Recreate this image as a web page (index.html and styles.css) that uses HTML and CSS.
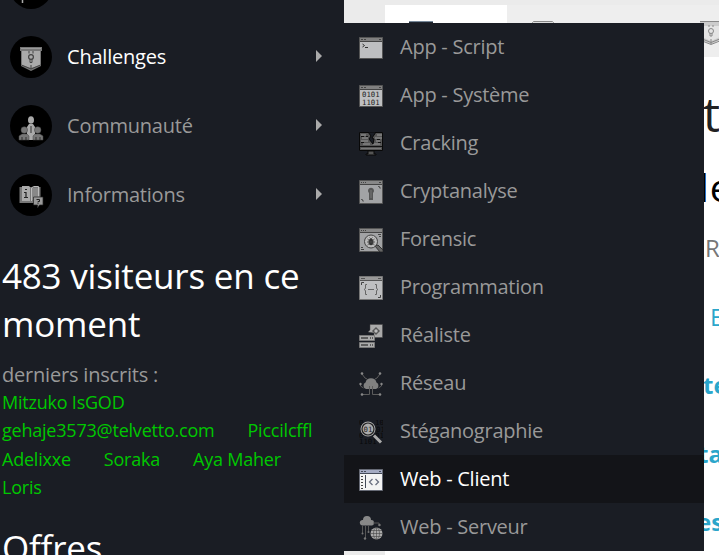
FILE: index.html
```html
<!DOCTYPE html>
<html lang="fr">
<head>
<meta charset="utf-8">
<title>Challenges</title>
<link rel="stylesheet" href="styles.css">
</head>
<body>
<div class="page">
  <aside class="sidebar">
    <ul class="nav">
      <li class="nav-item"><span class="disc"><svg width="42" height="42" viewBox="0 0 42 42"><path d="M12.500 31v5" stroke="#aaa" stroke-width="1.500"/></svg></span></li>
      <li class="nav-item active">
        <span class="disc"><svg width="42" height="42" viewBox="0 0 42 42"><path d="M10 11h22v4h-1v15l-10 5-10-5V15h-1z" fill="#777"/><path d="M12 15h18v14l-9 3-9-3z" fill="#aaa"/><path d="M11 12.500h20" stroke="#999"/><path d="M11.500 29l9.500 4 9.500-4" stroke="#444" fill="none"/><circle cx="21" cy="21" r="2.400" fill="none" stroke="#444" stroke-width="1.200"/><path d="M20 23v3.500h2V23M19 15v2.500m4-2.500v2.500M21 29v4" stroke="#444" fill="none"/></svg></span>
        <span class="label">Challenges</span><i class="caret"></i>
      </li>
      <li class="nav-item">
        <span class="disc"><svg width="42" height="42" viewBox="0 0 42 42"><g fill="#aaa"><ellipse cx="21" cy="15" rx="3" ry="3.800"/><path d="M17 35V22l2-3h4l2 3v13z"/></g><g fill="#777" stroke="#444" stroke-width=".5"><circle cx="14.300" cy="25" r="3.300"/><circle cx="27.700" cy="25" r="3.300"/><path d="M9 35v-4l3-2h5l2 2v4zM23 35v-4l2-2h5l3 2v4z"/></g><path d="M21 21v7M12 32v3m4-3v3m10-3v3m4-3v3" stroke="#333"/></svg></span>
        <span class="label">Communauté</span><i class="caret"></i>
      </li>
      <li class="nav-item">
        <span class="disc"><svg width="42" height="42" viewBox="0 0 42 42"><path d="M9.500 13h21v16h-21z" fill="#777"/><path d="M12 12h7l1 1v14h-8z" fill="#aaa"/><path d="M21 14h7v12h-7z" fill="#888"/><path d="M21.500 27V14l2-1.500h5v10" fill="none" stroke="#bbb"/><path d="M14 18.500h2V23m-2 .5h4M15 15.500h2" stroke="#222" fill="none" stroke-width="1.200"/><path d="M23.500 23h9.500v8h-3.500l-2 3v-3h-4z" fill="#999" stroke="#222" stroke-width=".7"/><path d="M26.500 25.500h3v2H28v1m0 .7v1" stroke="#222" fill="none"/></svg></span>
        <span class="label">Informations</span><i class="caret"></i>
      </li>
    </ul>
    <h2 class="title">483 visiteurs en ce moment</h2>
    <p class="latest">derniers inscrits :</p>
    <div class="members">
      <div class="line"><a>Mitzuko IsGOD</a></div>
      <div class="line"><a>gehaje3573@telvetto.com</a><a>Piccilcffl</a></div>
      <div class="line"><a>Adelixxe</a><a>Soraka</a><a>Aya Maher</a></div>
      <div class="line"><a>Loris</a></div>
    </div>
    <h2 class="title offers">Offres</h2>
  </aside>

  <main class="main">
    <div class="tabs">
      <div class="tab current"><svg width="24" height="24" viewBox="0 0 24 24"><path d="M0 0h24v20H0z" fill="#202630"/><path d="M0 .5h24" stroke="#789"/></svg></div>
      <div class="tab"><svg width="22" height="24" viewBox="0 0 22 24"><path d="M.5 20V1.500l1-1h19l1 1V20" fill="#ddd" stroke="#888"/></svg></div>
      <div class="tab"><svg width="22" height="26" viewBox="0 0 22 26"><path d="M0 .5h22v4h-1v14l-10 5-10-5v-14H0z" fill="#ccc"/><path d="M0 .5h22M1 17.500l10 4 10-4M1 19.500l10 4 10-4" fill="none" stroke="#888"/><path d="M2 5h18v11l-9 4-9-4z" fill="#e4e4e4"/><circle cx="11" cy="10" r="2.500" fill="none" stroke="#888"/><path d="M10 12v3h2v-3M9 4v2m4-2v2m-2 12v5" fill="none" stroke="#888"/></svg></div>
    </div>
    <div class="content">
      <div class="c-title">t</div>
      <div class="c-head">le</div>
      <div class="c-item muted">R</div>
      <div class="c-item link">E</div>
      <div class="c-item strong">te</div>
      <div class="c-item strong ta">ta</div>
      <div class="c-item strong es">es</div>
    </div>
  </main>

  <ul class="submenu">
    <li><svg width="24" height="24" viewBox="0 0 24 24"><path d="M.5 1.500h23v21H.5z" fill="#bebfc1" stroke="#555"/><path d="M1 2h22v3H1z" fill="#808080"/><path d="M1 5.500h22M2 3.500h2m1 0h2m13 0h2" stroke="#444"/><path d="M3.500 8l2 1.500-2 1.500M6 11.500h3" fill="none" stroke="#333"/></svg>App - Script</li>
    <li><svg width="24" height="24" viewBox="0 0 24 24"><path d="M.5 1.500h23v21H.5z" fill="#bebfc1" stroke="#555"/><path d="M1 2h22v3H1z" fill="#808080"/><path d="M1 5.500h22M2 3.500h2m1 0h2m13 0h2" stroke="#444"/><g class="bits"><text x="3" y="13.300">0101</text><text x="3" y="20.800">1101</text></g></svg>App - Système</li>
    <li><svg width="24" height="24" viewBox="0 0 24 24"><path d="M.5.5h23v18H.5zM9 19h6v3h2v1H7v-1h2z" fill="#555" stroke="#080808"/><path d="M2 3h5m-4 3h6m-7 3h7m-5 3h7m7-9h5m-7 3h7m-6 3h4m-7 3h7" stroke="#999"/><path d="M2 4.500h3m2 0h2M2 10.500h3m13-3h3m-2 3h3M1 14.500h22" stroke="#111"/><path d="M9 0l3 4-2 3 4 5 1-5-2-1 4-6z" fill="#1a1d24" stroke="#080808"/><path d="M2 16.500h20" stroke="#777"/></svg>Cracking</li>
    <li><svg width="24" height="24" viewBox="0 0 24 24"><path d="M.5.5h23v23H.5z" fill="#a2a3a5" stroke="#555"/><path d="M1 1h22v3H1z" fill="#888"/><path d="M1 4.500h22M2 2.500h1m1 0h1m1 0h1m13 0h2" stroke="#444"/><path d="M19 6.500h1.500V8H22M2 19.500h1.500V21H5" fill="none" stroke="#555"/><path d="M9 11a3 3 0 1 1 5 2v7h-4v-7a3 3 0 0 1-1-2z" fill="#555"/><path d="M12 10v8" stroke="#777"/></svg>Cryptanalyse</li>
    <li><svg width="24" height="24" viewBox="0 0 24 24"><path d="M.5.5h23v23H.5z" fill="#a2a3a5" stroke="#555"/><path d="M1 1h22v3H1z" fill="#888"/><path d="M1 4.500h22M2 2.500h1m1 0h1m1 0h1M19 6.500h3m-2 2h2M2 19.500h2m-2 2h3" stroke="#444"/><path d="M16 18l3-1 5 5v2h-3z" fill="#666" stroke="#333"/><circle cx="12" cy="13.500" r="6.500" fill="#bbb" stroke="#444"/><ellipse cx="12" cy="14" rx="2.400" ry="3.200" fill="#333"/><path d="M8.500 11l7 6m0-6l-7 6m-.5-3h8M10.500 9.500l1.500 1.500 1.500-1.500" stroke="#444" stroke-width=".8" fill="none"/></svg>Forensic</li>
    <li><svg width="24" height="24" viewBox="0 0 24 24"><path d="M.5.5h23v23H.5z" fill="#bebfc1" stroke="#777"/><path d="M1 1h22v3H1z" fill="#999"/><path d="M1 4.500h22M2 2.500h4m13 0h3" stroke="#555"/><path d="M2.500 9V6.500H5M19 21.500h2.500V19" fill="none" stroke="#444"/><path d="M8 8.500H6.500v4L5 13.500l1.500 1v4H8m8-10h1.500v4l1.500 1-1.500 1v4H16m-7-5h6" fill="none" stroke="#666"/></svg>Programmation</li>
    <li><svg width="24" height="24" viewBox="0 0 24 24"><path d="M11 .5h12.500v13H15V9L9 8l2-2z" fill="#aaa" stroke="#444" stroke-width=".5"/><path d="M17 3l4 4-4 4-4-4z" fill="#555"/><circle cx="17" cy="7" r="1.700" fill="#bbb"/><path d="M.5 11.500h15v5H.5zM.5 18.500h15v5H.5z" fill="#aaa" stroke="#777"/><path d="M2 14h7m2 0h1m1 0h1M2 21h7m2 0h1m1 0h1" stroke="#444" stroke-width="1.500"/></svg>Réaliste</li>
    <li><svg width="24" height="24" viewBox="0 0 24 24"><path d="M7 17a3.500 3.500 0 0 1-.5-6.500 5.700 5.700 0 0 1 11 0A3.500 3.500 0 0 1 17 17z" fill="#808080"/><path d="M3 2l3 4 2 1m13-5l-3 4-2 1M1.500 12v2l3 2m18-4v2l-3 2M10.500 14v8.500H3M13.500 14v8.500H21" fill="none" stroke="#5c5c5c"/><g fill="#888"><circle cx="3" cy="1.500" r="1.300"/><circle cx="21" cy="1.500" r="1.300"/><circle cx="1.500" cy="12" r="1.200"/><circle cx="22.500" cy="12" r="1.200"/><circle cx="3" cy="22.500" r="1.300"/><circle cx="21" cy="22.500" r="1.300"/></g></svg>Réseau</li>
    <li><svg width="24" height="24" viewBox="0 0 24 24"><g class="bits dark"><text x="0" y="5">0</text><text x="16" y="5">10</text><text x="17" y="11.500">01</text><text x="0" y="17.500">0</text><text x="16" y="17.500">01</text><text x="0" y="24">1101</text></g><path d="M15 15.500l7 7" stroke="#aaa" stroke-width="3"/><circle cx="9" cy="9" r="7.500" fill="#aaa"/><circle cx="9" cy="9" r="6" fill="none" stroke="#222" stroke-width="1.200"/><g class="bits"><text x="4.500" y="11.600">01</text></g></svg>Stéganographie</li>
    <li class="selected"><svg width="24" height="24" viewBox="0 0 24 24"><path d="M.5 1.500h23v21H.5z" fill="#f3f3f3" stroke="#666a75"/><path d="M1 2h22v3H1z" fill="#a4aac2"/><path d="M1 5.500h22M2 3.500h2m1 0h2m13 0h2M6.500 7v13" stroke="#444a58"/><path d="M2 8.500h2m-2 3h2m-2 3h2m-2 3h2m-2 3h2" stroke="#444"/><path d="M13.500 11l-3 3 3 3m3-6l3 3-3 3" fill="none" stroke="#6a6f80" stroke-width="1.300"/></svg>Web - Client</li>
    <li><svg width="24" height="24" viewBox="0 0 24 24"><path d="M3 9.500a2.800 2.800 0 0 1 0-5.500h1a4 4 0 0 1 8 0 2.800 2.800 0 0 1 1 5.500z" fill="#888"/><path d="M3.500 10v7M6.500 10v12M9.500 10v5M14 7h6v3" fill="none" stroke="#555"/><g fill="#777"><circle cx="3.500" cy="17.500" r="1"/><circle cx="6" cy="22.500" r="1.200"/><circle cx="9.500" cy="16" r="1"/><circle cx="20.500" cy="9" r="1.200"/></g><circle cx="17.500" cy="17.500" r="6" fill="#aaa"/><path d="M11 17.500h13M12 14.500h11M12 20.500h11M17.500 11v13" stroke="#444" stroke-width=".6"/><ellipse cx="17.500" cy="17.500" rx="3" ry="6" fill="none" stroke="#444" stroke-width=".6"/></svg>Web - Serveur</li>
  </ul>
</div>
</body>
</html>
```
FILE: styles.css
```css
* { box-sizing: border-box; }
body { margin: 0; font-family: "Open Sans", sans-serif; overflow: hidden; }
ul { list-style: none; margin: 0; padding: 0; }
h2, p { margin: 0; font-weight: 400; }

.page { position: relative; display: flex; width: 719px; height: 555px; overflow: hidden; background: #fff; }

.sidebar { width: 344px; flex: none; height: 555px; overflow: hidden; background: #1a1d24; color: #999; }
.nav { margin-top: -47px; }
.nav-item { display: flex; align-items: center; height: 69px; padding: 0 22px 0 10px; font-size: 20px; letter-spacing: -.22px; }
.nav-item.active { color: #fff; }
.disc { width: 42px; height: 42px; border-radius: 50%; background: #000; margin-right: 15px; }
.disc svg { display: block; }
.label { flex: 1; }
.caret { border: 6px solid transparent; border-left-color: #aaa; border-right-width: 0; margin-bottom: 1px; }
.title { padding: 23px 2px 0; font-size: 35px; line-height: 48px; letter-spacing: -.2px; color: #fff; }
.latest { padding-left: 2px; margin-top: 12px; font-size: 20px; line-height: 30px; letter-spacing: -.2px; }
.members { margin-top: -2px; padding-left: 2px; font-size: 18px; line-height: 28.300px; letter-spacing: -.22px; }
.line { display: flex; gap: 33px; white-space: nowrap; }
.members a { color: #00c800; }
.offers { padding-top: 23px; }

.main { flex: 1; border-left: 41px solid #ebebeb; min-width: 0; overflow: hidden; }
.tabs { display: flex; height: 57px; padding-top: 5px; background: #ebebeb; }
.tab { flex: none; width: 122px; padding: 16px 24px; background: #eee; }
.tab + .tab { padding-left: 25px; }
.tab:last-child { width: 168px; padding-left: 71px; }
.tab.current { background: #fff; }
.content { margin-left: 318px; white-space: nowrap; color: #222; }
.c-title { font-size: 48px; line-height: 60px; padding-top: 27px; }
.c-head { font-size: 39px; line-height: 60px; margin: 13px 0 0 -4px; letter-spacing: 1px; color: #000; }
.c-item { font-size: 24px; line-height: 34px; height: 68.500px; }
.muted { color: #777; margin: 14px 0 0 2px; }
.link { color: #2ba6cb; margin-left: 7px; }
.strong { color: #2ba6cb; font-weight: 700; }
.ta { margin-left: -5px; }
.es { margin-left: -6px; }

.submenu { position: absolute; left: 344px; top: 23px; width: 360px; background: #1a1d24; color: #999; }
.submenu li { display: flex; align-items: center; gap: 17px; height: 48px; padding: 0 15px 2px; font-size: 20px; letter-spacing: -.25px; white-space: nowrap; }
.submenu svg { flex: none; margin-top: 4px; }
.submenu .selected { background: #131418; color: #fff; }
.bits { font: 400 7.300px "DejaVu Sans Mono", monospace; letter-spacing: 0; fill: #222; }
.dark { fill: #08090b; }
```
